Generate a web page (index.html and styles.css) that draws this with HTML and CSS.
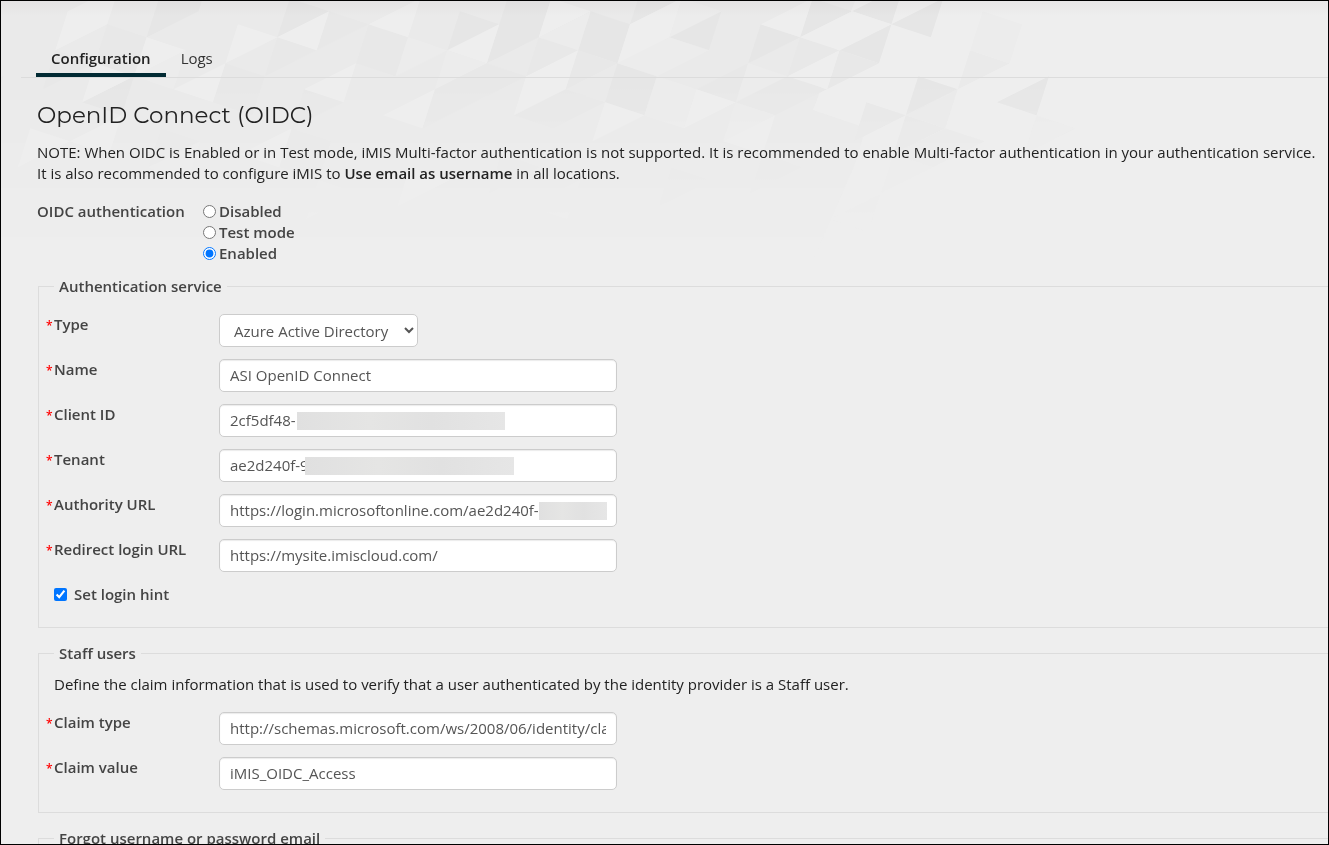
FILE: index.html
```html
<!DOCTYPE html>
<html lang="en">
<head>
  <meta charset="UTF-8">
  <title>OpenID Connect (OIDC)</title>
  <meta name="viewport" content="width=device-width, initial-scale=1">
  <link rel="stylesheet" href="styles.css">
</head>
<body>
  <!-- triangle lattice: the matrix maps unit cells onto the slanted grid -->
  <svg class="backdrop" width="1100" height="260" aria-hidden="true">
    <defs>
      <linearGradient id="fade" x1="0" y1="0" x2="0" y2="1">
        <stop offset="0" stop-color="#fff"/>
        <stop offset="0.3" stop-color="#fff"/>
        <stop offset="0.65" stop-color="#777"/>
        <stop offset="1" stop-color="#000"/>
      </linearGradient>
      <mask id="fadeMask"><rect width="1100" height="260" fill="url(#fade)"/></mask>
    </defs>
    <g mask="url(#fadeMask)">
      <path class="mid" d="M0 0H854L812 109 865 127 853 166 812 260H0z"/>
      <g transform="matrix(39.4 13 -12.5 39 498.3 23.3)">
        <path class="dark" d="M-1 0h1l-1 1z M0 -1h1v1l-1 1z M2 -1h1v1h-1z M3 -2h1l-1 1z M3 0h1v1h-1z M5 -2v1h-1z M6 -2h1l-1 1z M7 -3h1l-1 1z M9 -4v1h-1z M9 -3v1h-1z M10 -4v1h-1z M10 -2h1l-1 1z M13 -3v1h-1z M-5 1h1l-1 1z M-7 1v1h-1z M-8 2h1l-1 1z M-8 4v1h-1z"/>
        <path class="soft" d="M1 0h1l-1 1z M2 0h1l-1 1z M0 1h1l-1 1z M0 1v1h-1z M6 -1v1h-1z M7 -1v1h-1z M7 -2h1l-1 1z M8 -2h1l-1 1z M7 -1h1l-1 1z M2 1h1l-1 1z M2 1v1h-1z M9 -1h1l-1 1z M10 -1h1l-1 1z M-3 1h1v1h-1z M-4 1h1l-1 1z M-8 3v1h-1z M-6 3h1l-1 1z M-5 3v1h-1z M-5 2h1l-1 1z M-4 3h1l-1 1z M-1 2h1l-1 1z M-9 3h1l-1 1z M-10 4h1l-1 1z M-11 5v1h-1z M-7 5h1l-1 1z M-4 4h1v1h-1z M1 3h1l-1 1z M5 2h1l-1 1z M7 1h1l-1 1z"/>
        <path class="mid" d="M11 -3h1l-1 1z M11 -2v1h-1z M11 -1v1h-1z M11 -1h1l-1 1z"/>
        <path class="faint" d="M11 -4h1v1h-1z M13 -2h1l-1 1z M10 0h1l-1 1z M10 1v1h-1z"/>
        <path class="light" d="M0 0v1h-1z M1 -1h1l-1 1z M2 0v1h-1z M1 1h1l-1 1z M4 -2v1h-1z M3 -1h1l-1 1z M5 0h1l-1 1z M7 -3v1h-1z M8 -3v1h-1z M8 -3h1l-1 1z M8 -2v1h-1z M9 -2h1l-1 1z M7 0v1h-1z M3 1h1l-1 1z M-4 1v1h-1z M-2 0v1h-1z M-6 2h1l-1 1z M-9 2v1h-1z M-10 3h1l-1 1z M-8 3h1l-1 1z M-9 4h1l-1 1z M-6 3v1h-1z M-3 2v1h-1z M-4 4v1h-1z M-1 2v1h-1z M-8 5v1h-1z M-10 6h1l-1 1z M-1 4h1l-1 1z"/>
        <path class="pale" d="M2 -1v1h-1z M4 -1v1h-1z M4 -2h1l-1 1z M4 -1h1l-1 1z M4 0h1v1h-1z M6 -1h1l-1 1z M6 0h1l-1 1z M-1 1h1l-1 1z M-2 1h1l-1 1z M-7 3v1h-1z M-6 5v1h-1z M-3 5h1l-1 1z M3 3v1h-1z"/>
      </g>
    </g>
  </svg>

  <nav class="tabs">
    <a href="#configuration" class="tab active">Configuration</a>
    <a href="#logs" class="tab">Logs</a>
  </nav>

  <main id="configuration">
    <h1>OpenID Connect (OIDC)</h1>
    <p class="note">NOTE: When OIDC is Enabled or in Test mode, iMIS Multi-factor authentication is not supported. It is recommended to enable Multi-factor authentication in your authentication service.<br>
      It is also recommended to configure iMIS to <strong>Use email as username</strong> in all locations.</p>

    <div class="mode" role="radiogroup" aria-labelledby="mode-label">
      <span id="mode-label" class="mode-label">OIDC authentication</span>
      <div class="options">
        <label><input type="radio" name="mode">Disabled</label>
        <label><input type="radio" name="mode">Test mode</label>
        <label><input type="radio" name="mode" checked>Enabled</label>
      </div>
    </div>

    <fieldset>
      <legend>Authentication service</legend>
      <div class="row">
        <label class="required" for="type">Type</label>
        <select id="type">
          <option>Azure Active Directory</option>
        </select>
      </div>
      <div class="row">
        <label class="required" for="name">Name</label>
        <input type="text" id="name" value="ASI OpenID Connect">
      </div>
      <div class="row">
        <label class="required" for="client-id">Client ID</label>
        <div class="field">
          <input type="text" id="client-id" value="2cf5df48-">
          <span class="redacted redacted-client"></span>
        </div>
      </div>
      <div class="row">
        <label class="required" for="tenant">Tenant</label>
        <div class="field">
          <input type="text" id="tenant" value="ae2d240f-9">
          <span class="redacted redacted-tenant"></span>
        </div>
      </div>
      <div class="row">
        <label class="required" for="authority">Authority URL</label>
        <div class="field">
          <input type="text" id="authority" value="https://login.microsoftonline.com/ae2d240f-">
          <span class="redacted redacted-authority"></span>
        </div>
      </div>
      <div class="row">
        <label class="required" for="redirect">Redirect login URL</label>
        <input type="text" id="redirect" value="https://mysite.imiscloud.com/">
      </div>
      <div class="row">
        <label class="check"><input type="checkbox" checked>Set login hint</label>
      </div>
    </fieldset>

    <fieldset>
      <legend>Staff users</legend>
      <p class="hint">Define the claim information that is used to verify that a user authenticated by the identity provider is a Staff user.</p>
      <div class="row">
        <label class="required" for="claim-type">Claim type</label>
        <input type="text" id="claim-type" value="http://schemas.microsoft.com/ws/2008/06/identity/claims/role">
      </div>
      <div class="row">
        <label class="required" for="claim-value">Claim value</label>
        <input type="text" id="claim-value" value="iMIS_OIDC_Access">
      </div>
    </fieldset>

    <fieldset>
      <legend>Forgot username or password email</legend>
    </fieldset>
  </main>
</body>
</html>
```

FILE: styles.css
```css
* {
  box-sizing: border-box;
}

body {
  position: relative;
  margin: 0;
  height: 100vh;
  overflow: hidden;
  border: 1px solid #000;
  background: linear-gradient(#e8e6e7, #eee 16px);
  color: #222;
  font-family: "Open Sans", "Noto Sans", sans-serif;
  font-size: 15px;
  line-height: 21px;
}

/* background pattern */
.backdrop {
  position: absolute;
  top: 0;
  left: 0;
  z-index: -1;
  mix-blend-mode: multiply;
}

.dark {
  fill: #f7f7f7;
}

.soft {
  fill: #f9f9f9;
}

.mid {
  fill: #fbfbfb;
}

.faint,
.pale {
  fill: #fdfdfd;
}

.light {
  fill: #fff;
}

/* tabs */
.tabs {
  display: flex;
  margin-left: 20px;
  padding: 42px 0 0 15px;
  border-bottom: 1px solid #dcdcdc;
}

.tab {
  padding: 5px 15px 4px;
  border-bottom: 4px solid transparent;
  color: #333;
  text-decoration: none;
}

.tab.active {
  border-bottom-color: #012a33;
  color: #222;
  font-weight: 600;
}

main {
  padding-left: 36px;
}

h1 {
  margin: 22px 0 12px;
  font-family: Montserrat, Inter, sans-serif;
  font-size: 23px;
  font-weight: 400;
  line-height: 30px;
}

p {
  margin: 0;
}

strong {
  font-weight: 600;
}

.mode {
  display: flex;
  margin: 17px 0 12px;
  color: #444;
  font-weight: 600;
}

.mode-label {
  width: 166px;
}

.options {
  display: flex;
  flex-direction: column;
}

.options label {
  display: flex;
  align-items: center;
}

.options input {
  margin: 0 3px 0 0;
}

/* form sections */
fieldset {
  margin: 0 0 15px 1px;
  padding: 10px 15px;
  border: 1px solid #dcdcdc;
  border-right: 0;
}

legend {
  padding: 0 5px;
  color: #444;
  font-weight: 600;
}

.row {
  display: flex;
  align-items: flex-start;
  margin-bottom: 12px;
}

legend + .row {
  margin-top: 7px;
}

.hint + .row {
  margin-top: 17px;
}

.row label {
  width: 165px;
  color: #444;
  font-weight: 600;
}

.required::before {
  content: "*";
  display: inline-block;
  width: 8px;
  margin-left: -8px;
  color: #f00;
  font-size: 12px;
}

.row .check {
  display: flex;
  align-items: center;
  width: auto;
}

.check input {
  margin: 0 7px 0 0;
}

.field {
  position: relative;
}

input[type="text"],
select {
  display: block;
  height: 33px;
  border: 1px solid #ccc;
  border-radius: 5px;
  background: #fff;
  color: #555;
  font: inherit;
}

input[type="text"] {
  width: 398px;
  padding: 4px 10px 6px;
  box-shadow: inset 0 1px 1px rgba(0, 0, 0, 0.08);
}

select {
  width: 199px;
  padding: 4px 0 4px 10px;
}

/* masked parts of the ids */
.redacted {
  position: absolute;
  top: 8px;
  height: 18px;
  background: linear-gradient(to right, #e0e0e0, #e5e5e4 35%, #e1e1e1 65%, #e6e6e6);
}

.redacted-client {
  left: 78px;
  width: 208px;
}

.redacted-tenant {
  left: 86px;
  width: 209px;
}

.redacted-authority {
  left: 320px;
  width: 68px;
}
```
